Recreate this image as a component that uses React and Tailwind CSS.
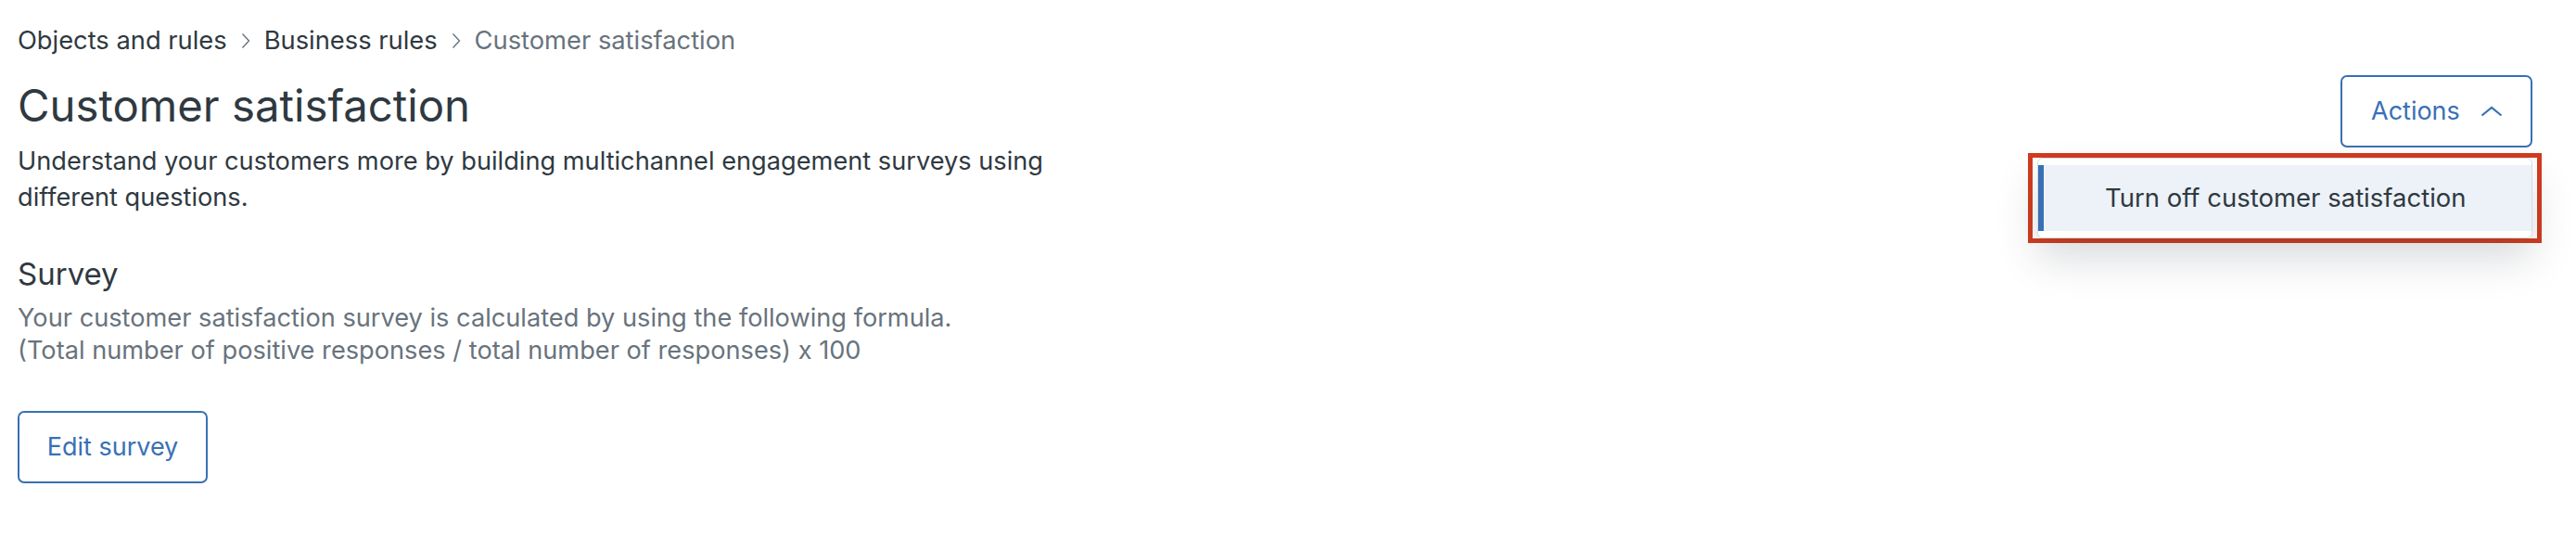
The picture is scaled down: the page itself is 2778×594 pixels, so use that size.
import React from 'react';

const Chevron = () => (
  <svg width="10" height="18" viewBox="0 0 10 18" className="mx-[15px] shrink-0">
    <path d="M1.5 1.5 L8.5 9 L1.5 16.5" fill="none" stroke="#68737d" strokeWidth="1.4" />
  </svg>
);

const App = () => {
  return (
    <div className="w-full h-[594px] bg-white text-[#2f3941] pl-[19px] pr-[47px] pt-[26px] font-['Inter',sans-serif]">
      <nav className="flex items-center text-[27.3px] leading-[36px]">
        <span>Objects and rules</span>
        <Chevron />
        <span>Business rules</span>
        <Chevron />
        <span className="text-[#68737d]">Customer satisfaction</span>
      </nav>

      <div className="mt-[19px] flex items-start justify-between">
        <div>
          <h1 className="text-[47.3px] leading-[66px] font-normal">Customer satisfaction</h1>
          <p className="mt-[7px] w-[1150px] text-[27.2px] leading-[39px]">
            Understand your customers more by building multichannel engagement surveys using different questions.
          </p>

          <h2 className="mt-[43px] text-[33px] leading-[40px] font-normal">Survey</h2>
          <p className="mt-[10px] text-[27.2px] leading-[35px] text-[#68737d]">
            Your customer satisfaction survey is calculated by using the following formula.
            <br />
            (Total number of positive responses / total number of responses) x 100
          </p>

          <button className="mt-[48px] h-[78px] w-[205px] border-2 border-[#3970b5] rounded-[7px] text-[27px] text-[#3970b5] bg-white">
            Edit survey
          </button>
        </div>

        <div className="relative">
          <button className="flex items-center h-[78px] w-[207px] pl-[31px] border-2 border-[#3970b5] rounded-[7px] text-[27px] text-[#3970b5] bg-white">
            <span>Actions</span>
            <svg width="24" height="12" viewBox="0 0 24 12" className="ml-[22px]">
              <path d="M1.5 10.5 L12 2 L22.5 10.5" fill="none" stroke="#3970b5" strokeWidth="2.2" />
            </svg>
          </button>

          <div className="absolute right-[-10px] top-[84px] border-[5px] border-[#d23b1f] px-[5px]">
            <div className="w-[534px] bg-white border border-[#d8dcde] rounded-[6px] py-[7px] shadow-[0_22px_44px_rgba(47,57,65,0.18)]">
              <div className="flex items-center h-[71px] bg-[#edf2f8] border-l-[6px] border-[#3970b5] pl-[66px] text-[27.5px] whitespace-nowrap">
                Turn off customer satisfaction
              </div>
            </div>
          </div>
        </div>
      </div>
    </div>
  );
};

export default App;
